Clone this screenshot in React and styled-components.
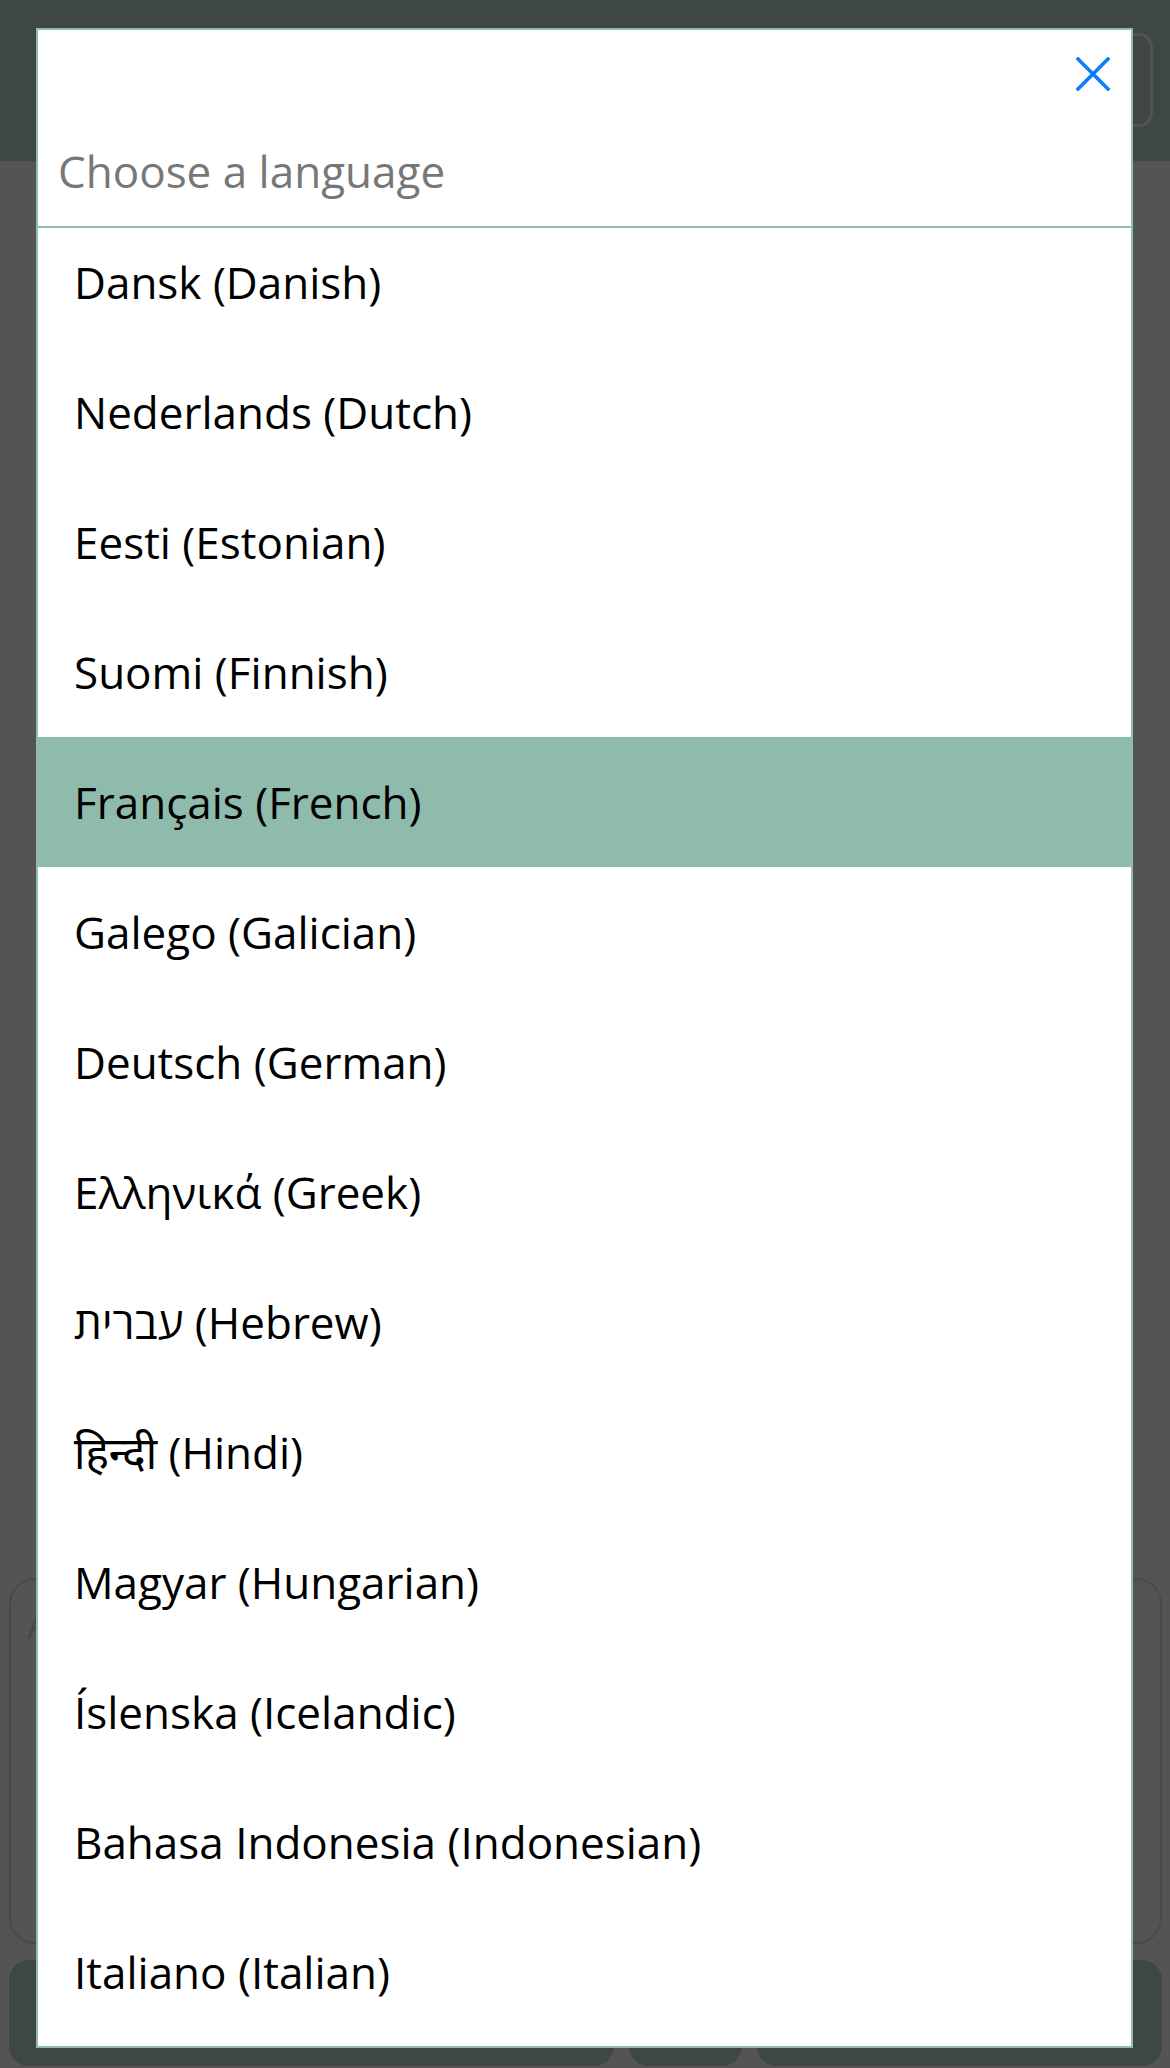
import React, { useEffect, useRef } from "react";
import styled, { createGlobalStyle } from "styled-components";

const GlobalStyle = createGlobalStyle`
  html, body {
    margin: 0;
    padding: 0;
    background: #545454;
  }
  body {
    font-family: "Open Sans", "Noto Sans", "DejaVu Sans", sans-serif;
  }
  * {
    box-sizing: border-box;
  }
`;

const languages = [
  "Dansk (Danish)",
  "Nederlands (Dutch)",
  "Eesti (Estonian)",
  "Suomi (Finnish)",
  "Français (French)",
  "Galego (Galician)",
  "Deutsch (German)",
  "Ελληνικά (Greek)",
  "עברית (Hebrew)",
  "हिन्दी (Hindi)",
  "Magyar (Hungarian)",
  "Íslenska (Icelandic)",
  "Bahasa Indonesia (Indonesian)",
  "Italiano (Italian)",
];

function App() {
  const listRef = useRef(null);

  useEffect(() => {
    // list is scrolled a little, first row sits under the search field
    if (listRef.current) listRef.current.scrollTop = 11;
  }, []);

  return (
    <>
      <GlobalStyle />
      <Page>
        <Header>
          <HeaderButton />
        </Header>
        <Body>
          <Card>
            <CardHint>A</CardHint>
          </Card>
          <ButtonRow>
            <BottomButton $width="605px" />
            <BottomButton $width="113px" />
            <BottomButton $width="405px" />
          </ButtonRow>
        </Body>
      </Page>

      <Modal>
        <CloseRow>
          <CloseButton aria-label="close">
            <svg width="34" height="34" viewBox="0 0 34 34">
              <path
                d="M2 2 L32 32 M32 2 L2 32"
                stroke="#0a7cff"
                strokeWidth="3.6"
                strokeLinecap="square"
              />
            </svg>
          </CloseButton>
        </CloseRow>
        <SearchInput placeholder="Choose a language" />
        <List ref={listRef}>
          {languages.map((v, i) => (
            <Item key={"lang" + i} $active={v === "Français (French)"}>
              {v}
            </Item>
          ))}
        </List>
      </Modal>
    </>
  );
}

const Page = styled.div`
  width: 100%;
  height: 2068px;
  display: flex;
  flex-direction: column;
  overflow: hidden;
`;

const Header = styled.header`
  height: 161px;
  background: #3e4744;
  display: flex;
  justify-content: flex-end;
  align-items: flex-start;
  padding: 33px 17px 0 0;
`;

const HeaderButton = styled.div`
  width: 140px;
  height: 94px;
  border: 3px solid #525252;
  border-radius: 14px;
`;

const Body = styled.main`
  flex: 1;
  background: #545454;
  display: flex;
  flex-direction: column;
  justify-content: flex-end;
  gap: 16px;
  padding: 0 8px 2px 9px;
`;

const Card = styled.div`
  height: 366px;
  border: 2px solid #454d4a;
  border-radius: 26px;
  padding: 18px 16px;
`;

const CardHint = styled.span`
  font-size: 38px;
  color: #474747;
`;

const ButtonRow = styled.div`
  display: flex;
  gap: 15px;
  height: 106px;
`;

const BottomButton = styled.div`
  width: ${(props) => props.$width};
  background: #3e4744;
  border-radius: 20px;
`;

const Modal = styled.div`
  position: fixed;
  top: 28px;
  left: 36px;
  width: 1097px;
  height: 2020px;
  background: #fff;
  border: 2px solid #8fbcb0;
  display: flex;
  flex-direction: column;
`;

const CloseRow = styled.div`
  height: 80px;
  display: flex;
  justify-content: flex-end;
  align-items: flex-start;
  padding: 27px 21px 0 0;
`;

const CloseButton = styled.button`
  border: none;
  background: none;
  padding: 0;
  width: 34px;
  height: 34px;
  display: flex;
`;

const SearchInput = styled.input`
  height: 118px;
  border: none;
  border-bottom: 2px solid #8fbcb0;
  outline: none;
  padding: 6px 0 0 20px;
  font-family: "Open Sans", sans-serif;
  font-size: 44px;
  color: #333;

  &::placeholder {
    color: #777;
  }
`;

const List = styled.ul`
  flex: 1;
  margin: 0;
  padding: 0 0 40px;
  list-style: none;
  overflow-y: auto;
  scrollbar-width: none;

  &::-webkit-scrollbar {
    display: none;
  }
`;

const Item = styled.li`
  height: 130px;
  display: flex;
  align-items: center;
  padding-left: 36px;
  font-size: 44px;
  color: #000;
  background: ${(props) => (props.$active ? "#8fbbad" : "transparent")};
`;

export default App;
